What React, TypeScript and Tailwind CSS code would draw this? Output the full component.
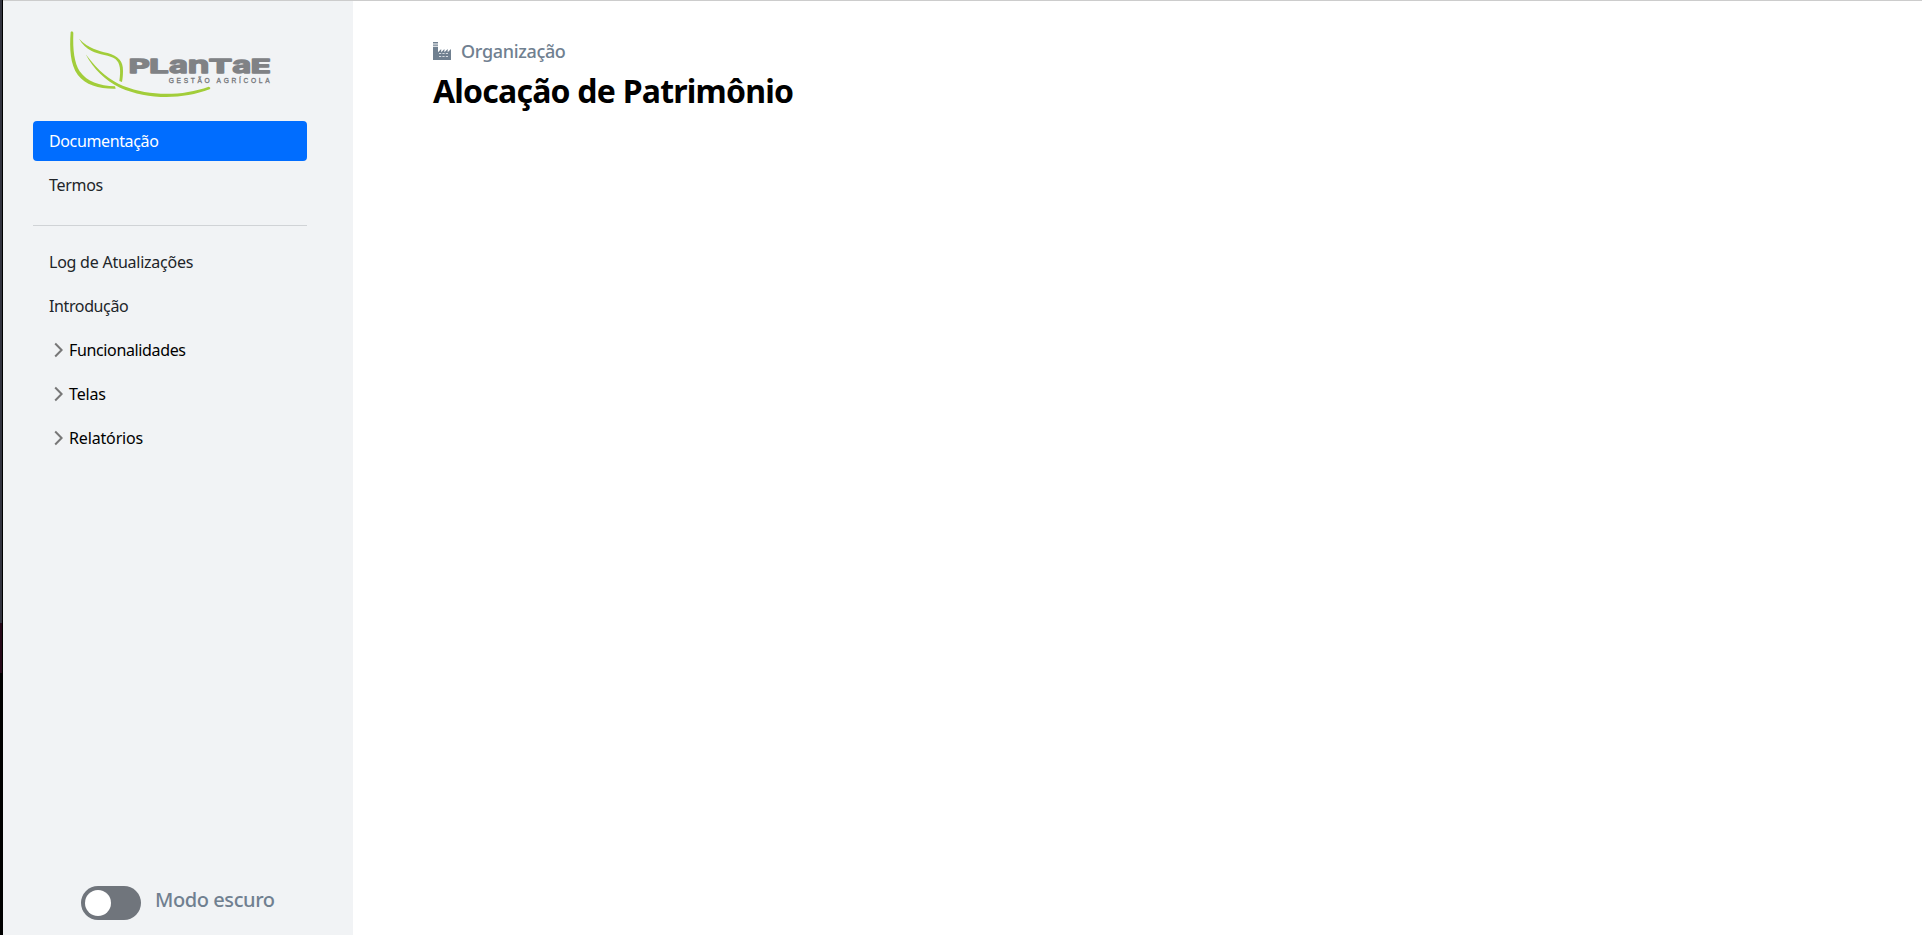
import React from "react";

function Logo() {
  return (
    <svg viewBox="0 0 660 270" className="h-[90px] w-[220px]" role="img">
      <g fill="#a2cd3a">
        <path d="M32 36 Q37 30 40 38 C38 92 43 128 59 154 C81 185 118 198 165 199 L167 206 C119 207 77 196 53 164 C31 134 28 86 32 36Z" />
        <path d="M57 56 C87 87 114 91 143 99 C175 108 190 124 189 153 C189 166 188 177 186 186 L178 183 C183 151 181 129 166 117 C152 106 116 104 95 93 C79 85 67 73 57 56Z" />
        <path d="M77 103 C116 155 150 181 190 198 C272 230 367 228 446 200 Q454 202 449 208 C364 240 262 239 180 203 C135 181 101 148 77 103Z" />
      </g>
      <g fill="#808285" stroke="#808285" strokeWidth="4" strokeLinejoin="round" fontFamily="Inter, sans-serif" fontWeight="700">
        <text y="160" fontSize="55">
          <tspan x="206" textLength="63" lengthAdjust="spacingAndGlyphs">P</tspan>
          <tspan x="268" textLength="58" lengthAdjust="spacingAndGlyphs">L</tspan>
          <tspan x="327" fontSize="71" textLength="57" lengthAdjust="spacingAndGlyphs">a</tspan>
          <tspan x="383" fontSize="71" textLength="65" lengthAdjust="spacingAndGlyphs">n</tspan>
          <tspan x="446" textLength="70" lengthAdjust="spacingAndGlyphs">T</tspan>
          <tspan x="517" fontSize="71" textLength="57" lengthAdjust="spacingAndGlyphs">a</tspan>
          <tspan x="572" textLength="60" lengthAdjust="spacingAndGlyphs">E</tspan>
        </text>
      </g>
      <text x="326" y="189" fontSize="20" fill="#707275" stroke="#707275" strokeWidth="0.8" fontFamily="Liberation Sans, sans-serif" textLength="303" lengthAdjust="spacing">
        GESTÃO AGRÍCOLA
      </text>
    </svg>
  );
}

function Chevron() {
  return (
    <svg viewBox="0 0 10 16" className="mr-[5px] ml-[5px] h-4 w-[10px]" fill="none" stroke="#777777" strokeWidth="2">
      <path d="M1.2 1.5 L7.6 8 L1.2 14.5" />
    </svg>
  );
}

function Factory() {
  return (
    <svg viewBox="0 0 18 18" className="size-[18px]" fill="#708090">
      <path d="M0 0H5V1.4H0ZM0 2.4H5V3.7H0ZM0 4.8H5V10.2L8.2 7V10.2L11.4 7V10.2L14.7 7V10.2L18 7V18H0Z" />
      <path d="M6 11h2.2v1H6zM9.4 11h2.2v1H9.4zM12.8 11h2.2v1h-2.2zM6 14h2.2v1H6zM9.4 14h2.2v1H9.4zM12.8 14h2.2v1h-2.2z" fill="#d5dae0" />
    </svg>
  );
}

const links = [
  { label: "Log de Atualizações", tracking: "tracking-[-0.24px]" },
  { label: "Introdução", tracking: "tracking-[-0.38px]" },
];

const groups = [
  { label: "Funcionalidades", tracking: "tracking-[-0.36px]" },
  { label: "Telas", tracking: "tracking-[-0.15px]" },
  { label: "Relatórios", tracking: "tracking-[-0.15px]" },
];

export default function App() {
  return (
    <div className="flex h-[935px] w-full overflow-hidden bg-white font-['Noto_Sans',sans-serif] text-base text-[#212529]">
      <div className="flex w-[3px] shrink-0 flex-col border-r border-black">
        <div className="h-[623px] bg-[#33343f]" />
        <div className="h-[50px] bg-[#250819]" />
        <div className="grow bg-black" />
      </div>
      <div className="flex grow border-t border-[#cccccc]">
        <aside className="flex w-[350px] shrink-0 flex-col bg-[#f1f3f5] pt-[19px]">
          <div className="ml-[57px] h-[101px]">
            <Logo />
          </div>
          <nav className="ml-[30px] flex w-[274px] flex-col">
            <div className="flex flex-col gap-1">
              <a className="flex h-10 items-center rounded-[4px] bg-[#006dff] px-4 text-white">
                <span className="tracking-[-0.37px]">Documentação</span>
              </a>
              <a className="flex h-10 items-center px-4">
                <span className="tracking-[-0.3px]">Termos</span>
              </a>
            </div>
            <hr className="mt-5 mb-4 border-t border-[#d0d3d6]" />
            <div className="flex flex-col gap-1">
              {links.map((l) => (
                <a key={l.label} className="flex h-10 items-center px-4">
                  <span className={l.tracking}>{l.label}</span>
                </a>
              ))}
              {groups.map((g) => (
                <button key={g.label} className="flex h-10 items-center px-4 text-black">
                  <Chevron />
                  <span className={g.tracking}>{g.label}</span>
                </button>
              ))}
            </div>
          </nav>
          <div className="mt-auto mb-[15px] ml-[78px] flex h-[34px] items-center">
            <div className="flex h-[34px] w-[60px] items-center rounded-full bg-[#70757c] pl-1">
              <div className="size-[26px] rounded-full bg-white" />
            </div>
            <span className="mb-[7px] ml-[14px] text-[20px] leading-6 font-medium tracking-[-0.42px] text-[#708090]">Modo escuro</span>
          </div>
        </aside>
        <main className="flex flex-col items-start pt-[36px] pl-20">
          <div className="flex h-[28px] items-center text-[#708090]">
            <Factory />
            <span className="ml-[10px] text-[18px] font-medium tracking-[-0.33px]">Organização</span>
          </div>
          <h1 className="mt-1 text-[32px] leading-[44px] font-bold tracking-[-0.78px] text-black">Alocação de Patrimônio</h1>
        </main>
      </div>
    </div>
  );
}
